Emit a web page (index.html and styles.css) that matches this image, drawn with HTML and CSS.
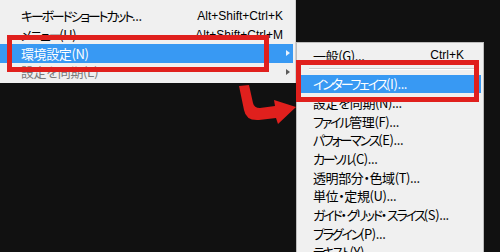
FILE: index.html
```html
<!DOCTYPE html>
<html lang="ja">
  <head>
    <meta charset="UTF-8" />
    <title>環境設定</title>
    <link rel="stylesheet" href="styles.css">
  </head>
  <body>
    <div class="menu main">
      <div class="item"><span class="label"><span class="kn">キーボードショートカット</span>...</span><span class="key">Alt+Shift+Ctrl+K</span></div>
      <div class="item"><span class="label"><span class="kn">メニュー</span>(U)...</span><span class="key">Alt+Shift+Ctrl+M</span></div>
      <div class="item active sub"><span class="label">環境設定(N)</span></div>
      <div class="item off sub"><span class="label">設定を同期(E)</span></div>
    </div>

    <div class="menu side">
      <div class="item"><span class="label">一般(G)...</span><span class="key">Ctrl+K</span></div>
      <div class="sep"></div>
      <div class="item active"><span class="label"><span class="kn">インターフェイス</span>(I)...</span></div>
      <div class="item"><span class="label">設定を同期(N)...</span></div>
      <div class="item"><span class="label"><span class="kn">ファイル</span>管理(F)...</span></div>
      <div class="item"><span class="label"><span class="kn">パフォーマンス</span>(E)...</span></div>
      <div class="item"><span class="label"><span class="kn">カーソル</span>(C)...</span></div>
      <div class="item"><span class="label">透明部分・色域(T)...</span></div>
      <div class="item"><span class="label">単位・定規(U)...</span></div>
      <div class="item"><span class="label"><span class="kn">ガイド</span>・<span class="kn">グリッド</span>・<span class="kn">スライス</span>(S)...</span></div>
      <div class="item"><span class="label"><span class="kn">プラグイン</span>(P)...</span></div>
      <div class="item"><span class="label"><span class="kn">テキスト</span>(Y)...</span></div>
    </div>

    <!-- annotations -->
    <div class="mark mark-1"></div>
    <div class="mark mark-2"></div>
    <svg class="arrow" width="500" height="252" viewBox="0 0 500 252">
      <path d="M239 86 L249 85 L253 103 Q254 108 260 108 L275 106 L274 100 L296 107 L278 124 L276 118 L259 120 Q246 121 244 110 Z" fill="#e0201d" />
    </svg>
  </body>
</html>
```

FILE: styles.css
```css
body {
  margin: 0;
  width: 500px;
  height: 252px;
  overflow: hidden;
  background-color: #111;
  display: flex;
  align-items: flex-start;
  font-family: "Noto Sans CJK JP", "Liberation Sans", sans-serif;
  font-size: 13px;
  font-feature-settings: "palt";
  color: #000;
}

.menu {
  background-color: #f0f0f0;
  box-sizing: border-box;
}

.main {
  width: 296px;
  height: 83px;
  padding-top: 6.67px;
  border-right: 1px solid #d0d0d0;
}

.side {
  width: 188px;
  height: 220px;
  margin-top: 42px;
  padding: 3px 2px 0 2px;
  border: 1px solid #bdbdbd;
  border-bottom: none;
}

.item {
  height: 18.67px;
  display: flex;
  align-items: center;
  padding-left: 21px;
  padding-right: 10px;
  white-space: nowrap;
  letter-spacing: -0.4px;
}

.side .item {
  padding-left: 14px;
  padding-right: 17px;
}

.item .label {
  flex: 1;
}

.kn {
  letter-spacing: -2.2px;
}

.item .key {
  font-family: "Liberation Sans", sans-serif;
  letter-spacing: 0;
  font-size: 12px;
}

.main .item {
  margin: 0 2px 0 0;
}

.active {
  background-color: #3899f3;
  color: #fff;
}

.off {
  color: #7a7a7a;
}

.sub {
  position: relative;
}

.sub::after {
  content: "";
  position: absolute;
  right: 3px;
  top: 6px;
  border-left: 4px solid #5a5a5a;
  border-top: 3.5px solid transparent;
  border-bottom: 3.5px solid transparent;
}

.active.sub::after {
  border-left-color: #e8f2fd;
}

.sep {
  height: 10px;
  margin: 0 3px 0 10px;
  background: linear-gradient(#f0f0f0 3px, #cfcfcf 3px, #cfcfcf 4px, #fff 4px, #fff 5px, #f0f0f0 5px);
}

.mark {
  position: absolute;
  box-sizing: border-box;
  border: 5px solid #e0201d;
}

.mark-1 {
  left: 7px;
  top: 35px;
  width: 262px;
  height: 37px;
}

.mark-2 {
  left: 296px;
  top: 60px;
  width: 183px;
  height: 42px;
}

.arrow {
  position: absolute;
  left: 0;
  top: 0;
}
```
